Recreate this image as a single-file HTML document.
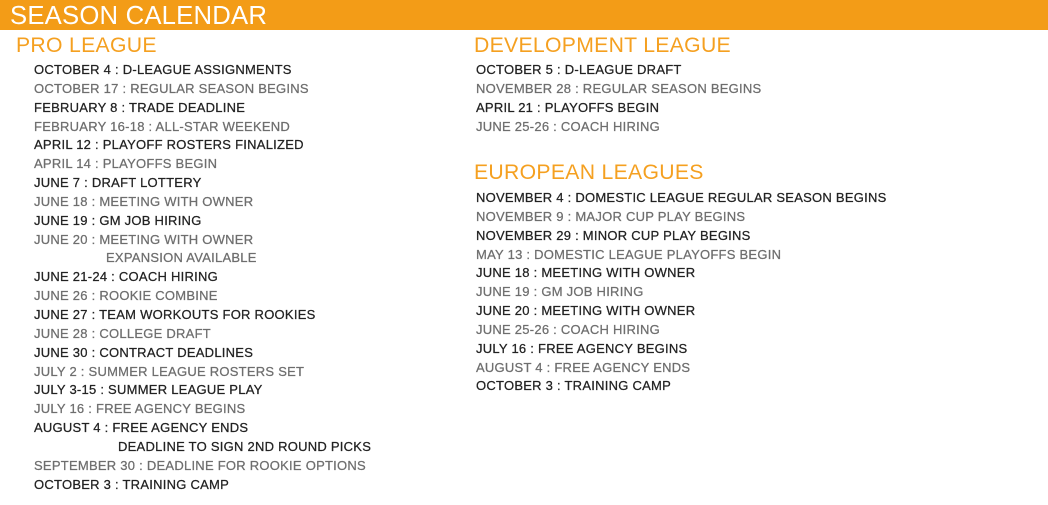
<!DOCTYPE html>
<html><head><meta charset="utf-8"><style>
body{margin:0;width:1048px;height:505px;background:#fff;position:relative;overflow:hidden;font-family:"Liberation Sans",sans-serif}
.bar{position:absolute;left:0;top:0;width:1048px;height:30px;background:#f39c17}
.title{position:absolute;left:10px;top:1px;color:#fff;font-size:25.7px;line-height:30px;letter-spacing:0.2px}
.h{position:absolute;color:#f5a020;font-size:21.2px;line-height:24px;letter-spacing:0.3px}
.col{position:absolute;font-size:13px;line-height:18.85px;letter-spacing:0.25px;white-space:nowrap;-webkit-text-stroke:0.25px}
.d{color:#222}.g{color:#6e6e6e}
</style></head><body>
<div class="bar"></div>
<div class="title">SEASON CALENDAR</div>
<div class="h" style="left:16px;top:34px">PRO LEAGUE</div>
<div class="h" style="left:474px;top:34px">DEVELOPMENT LEAGUE</div>
<div class="h" style="left:474px;top:161px">EUROPEAN LEAGUES</div>
<div class="col" style="left:34px;top:61px">
<div class="d">OCTOBER 4 : D-LEAGUE ASSIGNMENTS</div>
<div class="g">OCTOBER 17 : REGULAR SEASON BEGINS</div>
<div class="d">FEBRUARY 8 : TRADE DEADLINE</div>
<div class="g">FEBRUARY 16-18 : ALL-STAR WEEKEND</div>
<div class="d">APRIL 12 : PLAYOFF ROSTERS FINALIZED</div>
<div class="g">APRIL 14 : PLAYOFFS BEGIN</div>
<div class="d">JUNE 7 : DRAFT LOTTERY</div>
<div class="g">JUNE 18 : MEETING WITH OWNER</div>
<div class="d">JUNE 19 : GM JOB HIRING</div>
<div class="g">JUNE 20 : MEETING WITH OWNER</div>
<div class="g" style="padding-left:72px">EXPANSION AVAILABLE</div>
<div class="d">JUNE 21-24 : COACH HIRING</div>
<div class="g">JUNE 26 : ROOKIE COMBINE</div>
<div class="d">JUNE 27 : TEAM WORKOUTS FOR ROOKIES</div>
<div class="g">JUNE 28 : COLLEGE DRAFT</div>
<div class="d">JUNE 30 : CONTRACT DEADLINES</div>
<div class="g">JULY 2 : SUMMER LEAGUE ROSTERS SET</div>
<div class="d">JULY 3-15 : SUMMER LEAGUE PLAY</div>
<div class="g">JULY 16 : FREE AGENCY BEGINS</div>
<div class="d">AUGUST 4 : FREE AGENCY ENDS</div>
<div class="d" style="padding-left:84px">DEADLINE TO SIGN 2ND ROUND PICKS</div>
<div class="g">SEPTEMBER 30 : DEADLINE FOR ROOKIE OPTIONS</div>
<div class="d">OCTOBER 3 : TRAINING CAMP</div>
</div>
<div class="col" style="left:476px;top:61px">
<div class="d">OCTOBER 5 : D-LEAGUE DRAFT</div>
<div class="g">NOVEMBER 28 : REGULAR SEASON BEGINS</div>
<div class="d">APRIL 21 : PLAYOFFS BEGIN</div>
<div class="g">JUNE 25-26 : COACH HIRING</div>
</div>
<div class="col" style="left:476px;top:189px">
<div class="d">NOVEMBER 4 : DOMESTIC LEAGUE REGULAR SEASON BEGINS</div>
<div class="g">NOVEMBER 9 : MAJOR CUP PLAY BEGINS</div>
<div class="d">NOVEMBER 29 : MINOR CUP PLAY BEGINS</div>
<div class="g">MAY 13 : DOMESTIC LEAGUE PLAYOFFS BEGIN</div>
<div class="d">JUNE 18 : MEETING WITH OWNER</div>
<div class="g">JUNE 19 : GM JOB HIRING</div>
<div class="d">JUNE 20 : MEETING WITH OWNER</div>
<div class="g">JUNE 25-26 : COACH HIRING</div>
<div class="d">JULY 16 : FREE AGENCY BEGINS</div>
<div class="g">AUGUST 4 : FREE AGENCY ENDS</div>
<div class="d">OCTOBER 3 : TRAINING CAMP</div>
</div>
</body></html>
